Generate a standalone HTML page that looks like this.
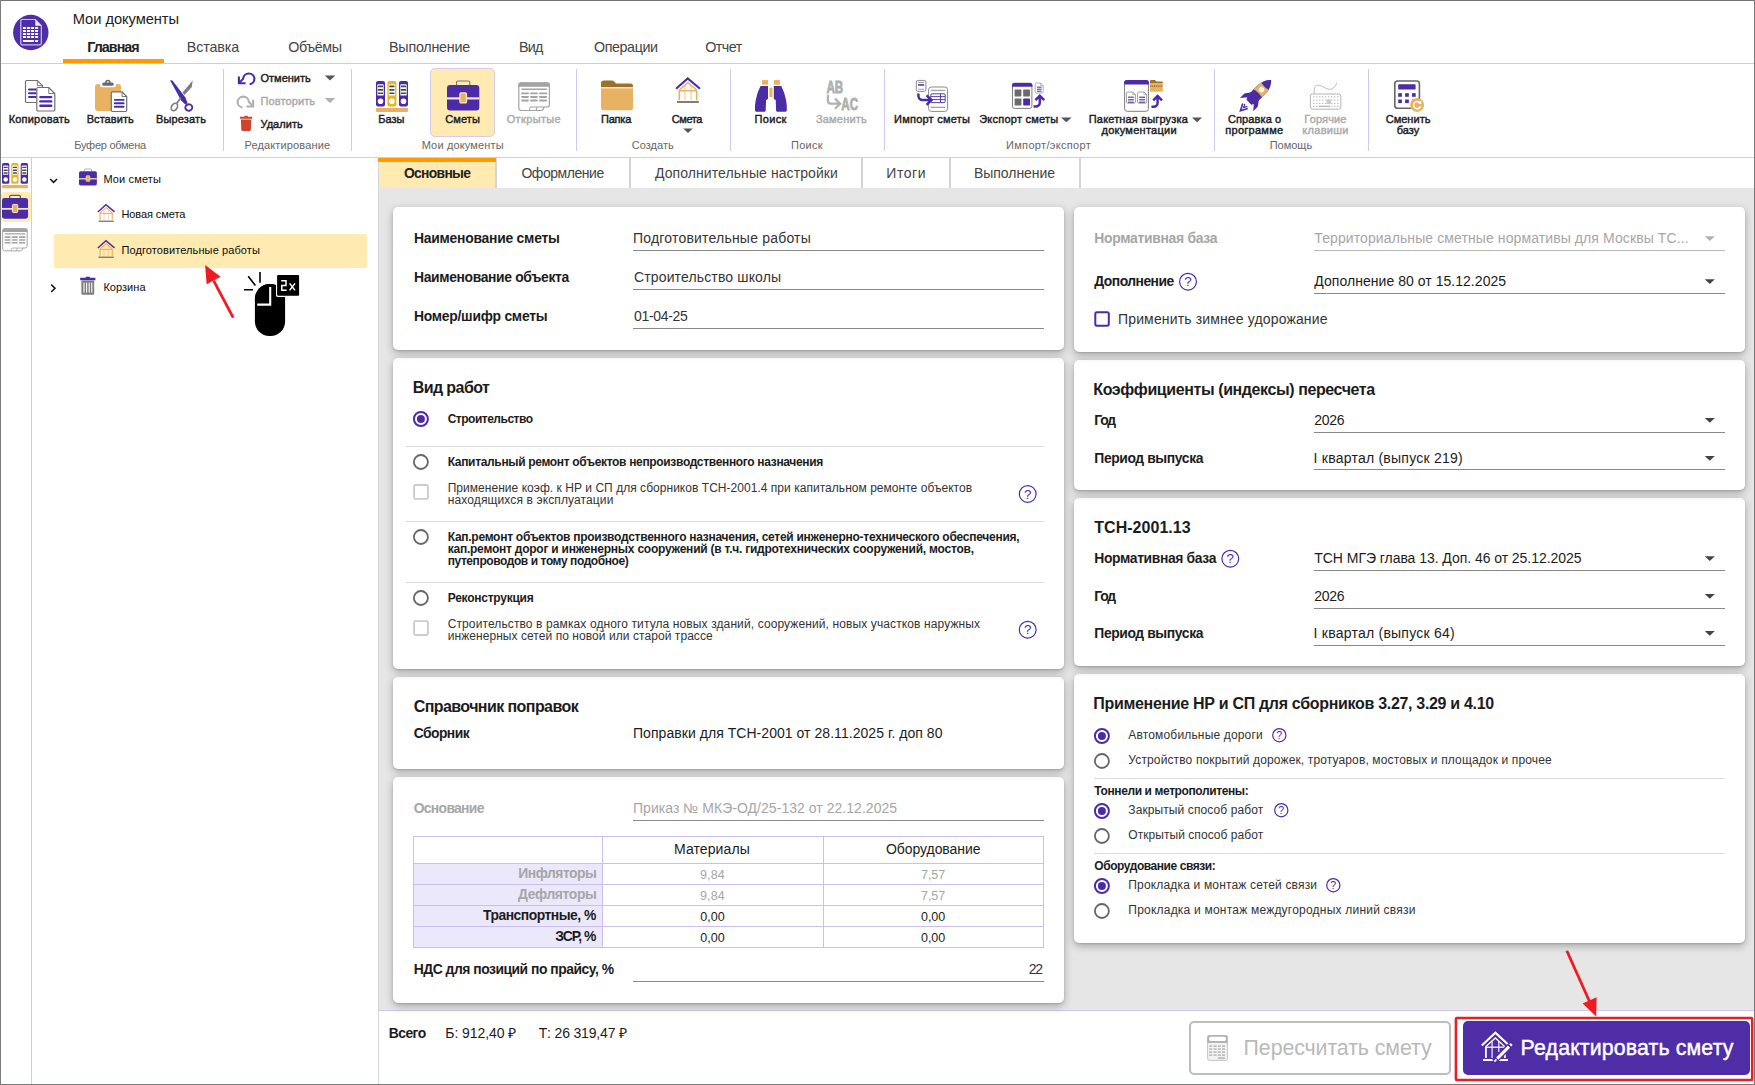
<!DOCTYPE html>
<html lang="ru"><head><meta charset="utf-8"><title>Мои документы</title>
<style>
html,body{margin:0;padding:0}
body{width:1755px;height:1085px;position:relative;overflow:hidden;background:#fff;font-family:"Liberation Sans",sans-serif}
.a{position:absolute}
.t{position:absolute;white-space:nowrap}
.tx{position:absolute;left:0;top:0;width:1755px;height:1085px}
.ov{position:absolute;left:0;top:0}
.ln{position:absolute;background:#d2c8f0}
.card{position:absolute;background:#fff;border-radius:5px;box-shadow:0 1px 2px rgba(0,0,0,.13),0 3px 9px rgba(0,0,0,.28)}
.ul{position:absolute;height:1px;background:#898989}
.gl{position:absolute;height:1px;background:#dcdcdc}
.hl{position:absolute;background:#ffeab2}
</style></head><body>
<div class="ln" style="left:0px;top:63px;width:1755px;height:1px;"></div>
<div class="a" style="left:63px;top:59px;width:101px;height:4px;background:#ff9a00"></div>
<div class="ln" style="left:0px;top:157px;width:1755px;height:1px;"></div>
<div class="ln" style="left:223px;top:69px;width:1px;height:82px;"></div>
<div class="ln" style="left:351px;top:69px;width:1px;height:82px;"></div>
<div class="ln" style="left:576px;top:69px;width:1px;height:82px;"></div>
<div class="ln" style="left:730px;top:69px;width:1px;height:82px;"></div>
<div class="ln" style="left:884px;top:69px;width:1px;height:82px;"></div>
<div class="ln" style="left:1214px;top:69px;width:1px;height:82px;"></div>
<div class="ln" style="left:1368px;top:69px;width:1px;height:82px;"></div>
<div class="a" style="left:430px;top:68px;width:65px;height:69px;background:#ffeab2;border:1px solid #d6c9f2;border-radius:5px;box-sizing:border-box"></div>
<div class="ln" style="left:31px;top:158px;width:1px;height:926px;"></div>
<div class="hl" style="left:1px;top:192px;width:29.8px;height:30px;border-radius:4px"></div>
<div class="hl" style="left:54px;top:234px;width:313px;height:34px;border-radius:2px"></div>
<div class="a" style="left:378px;top:188px;width:1377px;height:822px;background:#e6e6e6"></div>
<div class="a" style="left:378px;top:158px;width:1px;height:926px;background:#d2d5da"></div>
<div class="a" style="left:379px;top:158px;width:116px;height:30px;background:#ffeab2"></div>
<div class="a" style="left:495px;top:158px;width:1.8000000000000114px;height:30px;background:#d4d5d9"></div>
<div class="a" style="left:629px;top:158px;width:1.7999999999999545px;height:30px;background:#d4d5d9"></div>
<div class="a" style="left:861.4px;top:158px;width:1.7999999999999545px;height:30px;background:#d4d5d9"></div>
<div class="a" style="left:948.8px;top:158px;width:1.7999999999999545px;height:30px;background:#d4d5d9"></div>
<div class="a" style="left:1079px;top:158px;width:1.7999999999999545px;height:30px;background:#d4d5d9"></div>
<div class="a" style="left:378px;top:158px;width:118px;height:4px;background:#ff9a00"></div>
<div class="ln" style="left:378px;top:1010px;width:1377px;height:1px;"></div>
<div class="card" style="left:1074px;top:674px;width:671px;height:269px;"></div>
<div class="card" style="left:1074px;top:498px;width:671px;height:168px;"></div>
<div class="card" style="left:1074px;top:360px;width:671px;height:130px;"></div>
<div class="card" style="left:1074px;top:207px;width:671px;height:145px;"></div>
<div class="card" style="left:393px;top:777px;width:671px;height:226px;"></div>
<div class="card" style="left:393px;top:677px;width:671px;height:92px;"></div>
<div class="card" style="left:393px;top:358px;width:671px;height:311px;"></div>
<div class="card" style="left:393px;top:207px;width:671px;height:143px;"></div>
<div class="ul" style="left:633px;top:250px;width:411px;height:1px;"></div>
<div class="ul" style="left:633px;top:289px;width:411px;height:1px;"></div>
<div class="ul" style="left:633px;top:328px;width:411px;height:1px;"></div>
<div class="ul" style="left:633px;top:820px;width:411px;height:1px;"></div>
<div class="ul" style="left:633px;top:981px;width:411px;height:1px;"></div>
<div class="ul" style="left:1314px;top:250px;width:411px;height:1px;background:#b9b9b9"></div>
<div class="ul" style="left:1314px;top:293px;width:411px;height:1px;"></div>
<div class="ul" style="left:1314px;top:432px;width:411px;height:1px;"></div>
<div class="ul" style="left:1314px;top:469px;width:411px;height:1px;"></div>
<div class="ul" style="left:1314px;top:570px;width:411px;height:1px;"></div>
<div class="ul" style="left:1314px;top:608px;width:411px;height:1px;"></div>
<div class="ul" style="left:1314px;top:645px;width:411px;height:1px;"></div>
<div class="gl" style="left:406px;top:446px;width:638px;height:1px;"></div>
<div class="gl" style="left:406px;top:521px;width:638px;height:1px;"></div>
<div class="gl" style="left:406px;top:582px;width:638px;height:1px;"></div>
<div class="gl" style="left:1094px;top:778px;width:631px;height:1px;"></div>
<div class="gl" style="left:1094px;top:853px;width:631px;height:1px;"></div>
<div class="a" style="left:413px;top:836px;width:631px;height:112px;border:1px solid #cbbfee;box-sizing:border-box"></div>
<div class="a" style="left:414px;top:863px;width:188px;height:84px;background:#ece8fc"></div>
<div class="a" style="left:413px;top:863px;width:631px;height:1px;background:#cbbfee"></div>
<div class="a" style="left:413px;top:884px;width:631px;height:1px;background:#cbbfee"></div>
<div class="a" style="left:413px;top:905px;width:631px;height:1px;background:#cbbfee"></div>
<div class="a" style="left:413px;top:926px;width:631px;height:1px;background:#cbbfee"></div>
<div class="a" style="left:602px;top:836px;width:1px;height:112px;background:#cbbfee"></div>
<div class="a" style="left:823px;top:836px;width:1px;height:112px;background:#cbbfee"></div>
<div class="a" style="left:1189px;top:1021px;width:262px;height:54px;border:2px solid #bdbdbd;border-radius:5px;box-sizing:border-box;background:#fff"></div>
<div class="a" style="left:1463px;top:1021px;width:287px;height:54px;background:#4f2da7;border-radius:5px"></div>
<div class="a" style="left:0px;top:0px;width:1755px;height:1px;background:#747474"></div>
<div class="a" style="left:0px;top:0px;width:1px;height:1085px;background:#7c7c7c"></div>
<div class="a" style="left:1754px;top:0px;width:1px;height:1085px;background:#747a7a"></div>
<div class="a" style="left:0px;top:1084px;width:1755px;height:1px;background:#747a7a"></div>
<svg class="ov" width="1755" height="1085" viewBox="0 0 1755 1085">
<circle cx="30.8" cy="32.5" r="17.7" fill="#4f2da7"/><path d="M22,19.5 H35.2 L41.3,25.7 V43.6 a1.2,1.2 0 0 1 -1.2,1.2 H22 a1.2,1.2 0 0 1 -1.2,-1.2 V20.7 a1.2,1.2 0 0 1 1.2,-1.2 Z" fill="#4f2da7" stroke="#cdc2ea" stroke-width="1.2" stroke-linejoin="round"/><path d="M35.3,19.8 L41.2,25.8 H35.3 Z" fill="#f1eefa"/><rect x="22.90" y="27.00" width="3.1" height="2" rx="0.4" fill="#fff"/><rect x="26.93" y="27.00" width="3.1" height="2" rx="0.4" fill="#fff"/><rect x="30.96" y="27.00" width="3.1" height="2" rx="0.4" fill="#fff"/><rect x="34.99" y="27.00" width="3.1" height="2" rx="0.4" fill="#fff"/><rect x="22.90" y="30.02" width="3.1" height="2" rx="0.4" fill="#fff"/><rect x="26.93" y="30.02" width="3.1" height="2" rx="0.4" fill="#fff"/><rect x="30.96" y="30.02" width="3.1" height="2" rx="0.4" fill="#fff"/><rect x="34.99" y="30.02" width="3.1" height="2" rx="0.4" fill="#fff"/><rect x="22.90" y="33.04" width="3.1" height="2" rx="0.4" fill="#fff"/><rect x="26.93" y="33.04" width="3.1" height="2" rx="0.4" fill="#fff"/><rect x="30.96" y="33.04" width="3.1" height="2" rx="0.4" fill="#fff"/><rect x="34.99" y="33.04" width="3.1" height="2" rx="0.4" fill="#fff"/><rect x="22.90" y="36.06" width="3.1" height="2" rx="0.4" fill="#fff"/><rect x="26.93" y="36.06" width="3.1" height="2" rx="0.4" fill="#fff"/><rect x="30.96" y="36.06" width="3.1" height="2" rx="0.4" fill="#fff"/><rect x="34.99" y="36.06" width="3.1" height="2" rx="0.4" fill="#fff"/><rect x="22.9" y="40" width="11.1" height="2" rx="0.4" fill="#fff"/><rect x="34.99" y="40" width="3.1" height="2" rx="0.4" fill="#fff"/><path d="M26.7,80.5 H37.3 L42.5,85.7 V101.3 a1.2,1.2 0 0 1 -1.2,1.2 H26.7 a1.2,1.2 0 0 1 -1.2,-1.2 V81.7 a1.2,1.2 0 0 1 1.2,-1.2 Z" fill="#fff" stroke="#707070" stroke-width="1.2"/><path d="M37.3,80.5 V85.7 H42.5" fill="none" stroke="#707070" stroke-width="0.96"/><line x1="29" y1="89.4" x2="36" y2="89.4" stroke="#4c2ba6" stroke-width="2" stroke-linecap="round"/><line x1="29" y1="93.2" x2="36" y2="93.2" stroke="#4c2ba6" stroke-width="2" stroke-linecap="round"/><line x1="29" y1="97.1" x2="36" y2="97.1" stroke="#4c2ba6" stroke-width="2" stroke-linecap="round"/><path d="M38.0,87.5 H48.8 L54.8,93.5 V109.8 a1.2,1.2 0 0 1 -1.2,1.2 H38.0 a1.2,1.2 0 0 1 -1.2,-1.2 V88.7 a1.2,1.2 0 0 1 1.2,-1.2 Z" fill="#fff" stroke="#707070" stroke-width="1.2"/><path d="M48.8,87.5 V93.5 H54.8" fill="none" stroke="#707070" stroke-width="0.96"/><line x1="40.4" y1="97.1" x2="51.2" y2="97.1" stroke="#4c2ba6" stroke-width="2.4" stroke-linecap="round"/><line x1="40.4" y1="101.4" x2="51.2" y2="101.4" stroke="#4c2ba6" stroke-width="2.4" stroke-linecap="round"/><line x1="40.4" y1="105.8" x2="51.2" y2="105.8" stroke="#4c2ba6" stroke-width="2.4" stroke-linecap="round"/><rect x="95" y="84" width="26" height="27.1" rx="3" fill="#e8b262"/><rect x="99.8" y="82" width="16.4" height="5.3" rx="2.4" fill="#fff"/><circle cx="107.9" cy="82.5" r="2" fill="#fff" stroke="#6a6a6a" stroke-width="1.5"/><rect x="102.2" y="82.5" width="11.5" height="3.3" rx="1.6" fill="#6a6a6a"/><path d="M112.5,91.9 H122.10000000000001 L126.7,96.5 V110.3 a1.2,1.2 0 0 1 -1.2,1.2 H112.5 a1.2,1.2 0 0 1 -1.2,-1.2 V93.10000000000001 a1.2,1.2 0 0 1 1.2,-1.2 Z" fill="#fff" stroke="#707070" stroke-width="1.2"/><path d="M122.10000000000001,91.9 V96.5 H126.7" fill="none" stroke="#707070" stroke-width="0.96"/><line x1="114.8" y1="99.9" x2="123.6" y2="99.9" stroke="#4c2ba6" stroke-width="1.9" stroke-linecap="round"/><line x1="114.8" y1="103.3" x2="123.6" y2="103.3" stroke="#4c2ba6" stroke-width="1.9" stroke-linecap="round"/><line x1="114.8" y1="106.8" x2="123.6" y2="106.8" stroke="#4c2ba6" stroke-width="1.9" stroke-linecap="round"/><path d="M170,80.2 L172.4,80.5 L185.4,97.6 L187.6,103.2 L185.2,104.4 L181.2,100.6 Z" fill="#4c2ba6"/><path d="M192.7,80.5 L191.8,87 L184.6,95 L182.5,92.4 Z" fill="#7d7d7d"/><ellipse cx="188.8" cy="107.5" rx="3.5" ry="3.2" fill="none" stroke="#4c2ba6" stroke-width="1.9" transform="rotate(-20 188.8 107.5)"/><ellipse cx="174.4" cy="107" rx="2.8" ry="4" fill="none" stroke="#7d7d7d" stroke-width="1.6" transform="rotate(32 174.4 107)"/><path d="M180.8,97.8 L176.6,103.6" stroke="#7d7d7d" stroke-width="1.7"/><g transform="translate(0 0)" fill="none" stroke="#4c2ba6" stroke-width="2.1" stroke-linecap="butt"><path d="M238.9,76.6 V83.3 H245.6"/><path d="M239.3,82.9 L243.2,78.6 A5.6,5.4 0 1 1 249.6,84.2"/></g><g transform="translate(0 23.2) translate(492 0) scale(-1 1)" fill="none" stroke="#b0b0b0" stroke-width="2.1" stroke-linecap="butt"><path d="M238.9,76.6 V83.3 H245.6"/><path d="M239.3,82.9 L243.2,78.6 A5.6,5.4 0 1 1 249.6,84.2"/></g><path d="M244.4,115.8 h3.4 v0.9 h4.4 v2.1 h-12.2 v-2.1 h4.4 z" fill="#d0432f"/><path d="M240.9,119.5 H251.3 L250.9,129.6 a1.4,1.4 0 0 1 -1.4,1.4 H242.7 a1.4,1.4 0 0 1 -1.4,-1.4 Z" fill="#d0432f"/><path d="M324.8,75.4 H335.2 L330.0,80.4 Z" fill="#555"/><path d="M324.8,98 H335.2 L330.0,103 Z" fill="#b0b0b0"/><path d="M683.2,128.4 H692.8 L688.0,133 Z" fill="#555"/><path d="M1061,117.6 H1071.6 L1066.3,122.2 Z" fill="#555"/><path d="M1192,117.6 H1202 L1197.0,122.2 Z" fill="#555"/><g transform="translate(376 81) scale(1)"><rect x="0" y="0" width="9" height="25.6" rx="2" fill="#4c2ba6"/><rect x="1.3" y="3.2" width="6.4" height="11.4" rx="0.9" fill="#fff"/><rect x="1.9" y="4.6" width="5.2" height="1.7" rx="0.5" fill="#484848"/><rect x="1.9" y="8" width="5.2" height="1.7" rx="0.5" fill="#484848"/><rect x="1.9" y="11.4" width="5.2" height="1.7" rx="0.5" fill="#484848"/><circle cx="4.5" cy="20.3" r="2.8" fill="#fff"/><rect x="11.4" y="0" width="9" height="25.6" rx="2" fill="#e6b725"/><rect x="12.700000000000001" y="3.2" width="6.4" height="11.4" rx="0.9" fill="#fff"/><rect x="13.3" y="4.6" width="5.2" height="1.7" rx="0.5" fill="#484848"/><rect x="13.3" y="8" width="5.2" height="1.7" rx="0.5" fill="#484848"/><rect x="13.3" y="11.4" width="5.2" height="1.7" rx="0.5" fill="#484848"/><circle cx="15.9" cy="20.3" r="2.8" fill="#fff"/><rect x="23" y="0" width="9" height="25.6" rx="2" fill="#4c2ba6"/><rect x="24.3" y="3.2" width="6.4" height="11.4" rx="0.9" fill="#fff"/><rect x="24.9" y="4.6" width="5.2" height="1.7" rx="0.5" fill="#484848"/><rect x="24.9" y="8" width="5.2" height="1.7" rx="0.5" fill="#484848"/><rect x="24.9" y="11.4" width="5.2" height="1.7" rx="0.5" fill="#484848"/><circle cx="27.5" cy="20.3" r="2.8" fill="#fff"/><rect x="0" y="27" width="32" height="4" rx="1" fill="#e8b262"/></g><g transform="translate(2 163) scale(0.8125)"><rect x="0" y="0" width="9" height="25.6" rx="2" fill="#4c2ba6"/><rect x="1.3" y="3.2" width="6.4" height="11.4" rx="0.9" fill="#fff"/><rect x="1.9" y="4.6" width="5.2" height="1.7" rx="0.5" fill="#484848"/><rect x="1.9" y="8" width="5.2" height="1.7" rx="0.5" fill="#484848"/><rect x="1.9" y="11.4" width="5.2" height="1.7" rx="0.5" fill="#484848"/><circle cx="4.5" cy="20.3" r="2.8" fill="#fff"/><rect x="11.4" y="0" width="9" height="25.6" rx="2" fill="#e6b725"/><rect x="12.700000000000001" y="3.2" width="6.4" height="11.4" rx="0.9" fill="#fff"/><rect x="13.3" y="4.6" width="5.2" height="1.7" rx="0.5" fill="#484848"/><rect x="13.3" y="8" width="5.2" height="1.7" rx="0.5" fill="#484848"/><rect x="13.3" y="11.4" width="5.2" height="1.7" rx="0.5" fill="#484848"/><circle cx="15.9" cy="20.3" r="2.8" fill="#fff"/><rect x="23" y="0" width="9" height="25.6" rx="2" fill="#4c2ba6"/><rect x="24.3" y="3.2" width="6.4" height="11.4" rx="0.9" fill="#fff"/><rect x="24.9" y="4.6" width="5.2" height="1.7" rx="0.5" fill="#484848"/><rect x="24.9" y="8" width="5.2" height="1.7" rx="0.5" fill="#484848"/><rect x="24.9" y="11.4" width="5.2" height="1.7" rx="0.5" fill="#484848"/><circle cx="27.5" cy="20.3" r="2.8" fill="#fff"/><rect x="0" y="27" width="32" height="4" rx="1" fill="#e8b262"/></g><g transform="translate(447 80) scale(1)"><path d="M9.5,5.2 V2.5999999999999996 a1.6,1.6 0 0 1 1.6,-1.6 H21.2 a1.6,1.6 0 0 1 1.6,1.6 V5.2" fill="none" stroke="#747474" stroke-width="1.1"/><rect x="0" y="5" width="32.3" height="25.6" rx="3" fill="#4c2ba6"/><rect x="0" y="17.3" width="32.3" height="2.2" fill="#f7e6c4"/><rect x="12.9" y="12.9" width="6.6" height="10" rx="1" fill="#e8b262" stroke="#fbe8bd" stroke-width="1.2"/></g><g transform="translate(2 194) scale(0.807)"><path d="M9.5,5.2 V3.1999999999999997 a1.6,1.6 0 0 1 1.6,-1.6 H21.2 a1.6,1.6 0 0 1 1.6,1.6 V5.2" fill="none" stroke="#5e5e5e" stroke-width="1.6"/><rect x="0" y="5" width="32.3" height="25.6" rx="3" fill="#4c2ba6"/><rect x="0" y="17.3" width="32.3" height="2.2" fill="#f7e6c4"/><rect x="12.9" y="12.9" width="6.6" height="10" rx="1" fill="#e8b262" stroke="#fbe8bd" stroke-width="1.2"/></g><g transform="translate(79 168.6) scale(0.553)"><path d="M9.5,5.2 V2.3999999999999995 a1.6,1.6 0 0 1 1.6,-1.6 H21.2 a1.6,1.6 0 0 1 1.6,1.6 V5.2" fill="none" stroke="#8a8a8a" stroke-width="1.2"/><rect x="0" y="5" width="32.3" height="25.6" rx="3" fill="#4c2ba6"/><rect x="0" y="17.3" width="32.3" height="2.2" fill="#f7e6c4"/><rect x="12.9" y="12.9" width="6.6" height="10" rx="1" fill="#e8b262" stroke="#fbe8bd" stroke-width="1.2"/></g><g transform="translate(518.2 82.2) scale(1)"><path d="M0.6,2.8 a2.2,2.2 0 0 1 2.2,-2.2 H29 a2.2,2.2 0 0 1 2.2,2.2 V22.2 a2.6,2.6 0 0 1 -2.6,2.6 H25.9 L24.8,27.3 a1.6,1.6 0 0 1 -1.5,1 H3 a2.4,2.4 0 0 1 -2.4,-2.4 Z" fill="#fff" stroke="#a3a3a3" stroke-width="1.2"/><path d="M0.2,4.6 V2.8 a2.6,2.6 0 0 1 2.6,-2.6 H29 a2.6,2.6 0 0 1 2.6,2.6 V4.6 Z" fill="#a3a3a3"/><path d="M11.4,28.3 V26.2 a1.4,1.4 0 0 1 1.4,-1.4 H26.4 M18.7,24.8 L17.9,28.3" fill="none" stroke="#a3a3a3" stroke-width="1"/><rect x="3" y="6.2" width="26" height="1.7" rx="0.8" fill="#a3a3a3"/><rect x="3" y="10.2" width="7.7" height="1.9" rx="0.8" fill="#a3a3a3"/><rect x="11.9" y="10.2" width="7.7" height="1.9" rx="0.8" fill="#a3a3a3"/><rect x="20.9" y="10.2" width="8.1" height="1.9" rx="0.8" fill="#a3a3a3"/><rect x="3" y="13.8" width="7.7" height="1.9" rx="0.8" fill="#a3a3a3"/><rect x="11.9" y="13.8" width="7.7" height="1.9" rx="0.8" fill="#a3a3a3"/><rect x="20.9" y="13.8" width="8.1" height="1.9" rx="0.8" fill="#a3a3a3"/><rect x="3" y="17.3" width="7.7" height="1.9" rx="0.8" fill="#a3a3a3"/><rect x="11.9" y="17.3" width="7.7" height="1.9" rx="0.8" fill="#a3a3a3"/><rect x="20.9" y="17.3" width="8.1" height="1.9" rx="0.8" fill="#a3a3a3"/></g><g transform="translate(2.2 228.2) scale(0.8)"><path d="M0.6,2.8 a2.2,2.2 0 0 1 2.2,-2.2 H29 a2.2,2.2 0 0 1 2.2,2.2 V22.2 a2.6,2.6 0 0 1 -2.6,2.6 H25.9 L24.8,27.3 a1.6,1.6 0 0 1 -1.5,1 H3 a2.4,2.4 0 0 1 -2.4,-2.4 Z" fill="#fff" stroke="#a3a3a3" stroke-width="1.2"/><path d="M0.2,4.6 V2.8 a2.6,2.6 0 0 1 2.6,-2.6 H29 a2.6,2.6 0 0 1 2.6,2.6 V4.6 Z" fill="#a3a3a3"/><path d="M11.4,28.3 V26.2 a1.4,1.4 0 0 1 1.4,-1.4 H26.4 M18.7,24.8 L17.9,28.3" fill="none" stroke="#a3a3a3" stroke-width="1"/><rect x="3" y="6.2" width="26" height="1.7" rx="0.8" fill="#a3a3a3"/><rect x="3" y="10.2" width="7.7" height="1.9" rx="0.8" fill="#a3a3a3"/><rect x="11.9" y="10.2" width="7.7" height="1.9" rx="0.8" fill="#a3a3a3"/><rect x="20.9" y="10.2" width="8.1" height="1.9" rx="0.8" fill="#a3a3a3"/><rect x="3" y="13.8" width="7.7" height="1.9" rx="0.8" fill="#a3a3a3"/><rect x="11.9" y="13.8" width="7.7" height="1.9" rx="0.8" fill="#a3a3a3"/><rect x="20.9" y="13.8" width="8.1" height="1.9" rx="0.8" fill="#a3a3a3"/><rect x="3" y="17.3" width="7.7" height="1.9" rx="0.8" fill="#a3a3a3"/><rect x="11.9" y="17.3" width="7.7" height="1.9" rx="0.8" fill="#a3a3a3"/><rect x="20.9" y="17.3" width="8.1" height="1.9" rx="0.8" fill="#a3a3a3"/></g><path d="M601,88 V83.6 a3,3 0 0 1 3,-3 H612 a3,3 0 0 1 2.2,1 L616,83.6 H630.2 a2.8,2.8 0 0 1 2.8,2.8 V88 Z" fill="#9a7127"/><path d="M601,88.2 H633 V107.4 a2.8,2.8 0 0 1 -2.8,2.8 H603.8 a2.8,2.8 0 0 1 -2.8,-2.8 Z" fill="#e8b262"/><rect x="601" y="87.2" width="32" height="0.9" fill="#fff"/><g transform="translate(675.2 76.8) scale(1)" fill="none"><g stroke="#e8b262" stroke-width="1.45"><path d="M4.1,13.4 L12.8,5.7 L21.6,13.4"/><path d="M4,14 H21.8"/><path d="M4.1,13.4 V23.5 M21.5,13.4 V23.5" stroke-width="1.6"/><path d="M9.7,9 V23.5 M15.8,9 V23.5" stroke-width="1.3" opacity="0.55"/></g><path d="M0.9,11.9 L12.5,1.6 L24.8,11.9" stroke="#4c2ba6" stroke-width="2.1"/><path d="M1.8,25.2 H23.7" stroke="#707070" stroke-width="1.8"/></g><g transform="translate(97.2 203.6) scale(0.7)" fill="none"><g stroke="#e8b262" stroke-width="1.45"><path d="M4.1,13.4 L12.8,5.7 L21.6,13.4"/><path d="M4,14 H21.8"/><path d="M4.1,13.4 V23.5 M21.5,13.4 V23.5" stroke-width="1.6"/><path d="M9.7,9 V23.5 M15.8,9 V23.5" stroke-width="1.3" opacity="0.55"/></g><path d="M0.9,11.9 L12.5,1.6 L24.8,11.9" stroke="#4c2ba6" stroke-width="2.1"/><path d="M1.8,25.2 H23.7" stroke="#707070" stroke-width="1.8"/></g><g transform="translate(97.2 239.6) scale(0.7)" fill="none"><g stroke="#e8b262" stroke-width="1.45"><path d="M4.1,13.4 L12.8,5.7 L21.6,13.4"/><path d="M4,14 H21.8"/><path d="M4.1,13.4 V23.5 M21.5,13.4 V23.5" stroke-width="1.6"/><path d="M9.7,9 V23.5 M15.8,9 V23.5" stroke-width="1.3" opacity="0.55"/></g><path d="M0.9,11.9 L12.5,1.6 L24.8,11.9" stroke="#4c2ba6" stroke-width="2.1"/><path d="M1.8,25.2 H23.7" stroke="#707070" stroke-width="1.8"/></g><path d="M760.6,86 H768 V98.9 L766.1,100 L765.7,110.6 Q765.6,111.8 764.4,111.8 H756.6 Q755,111.8 755,110.2 V105.2 Q756,95 760.6,86 Z" fill="#4c2ba6"/><path d="M760.6,86 H768 V98.9 L766.1,100 L765.7,110.6 Q765.6,111.8 764.4,111.8 H756.6 Q755,111.8 755,110.2 V105.2 Q756,95 760.6,86 Z" fill="#4c2ba6" transform="translate(1541.8 0) scale(-1 1)"/><rect x="762" y="80.1" width="6.1" height="4.6" fill="#e8b262"/><rect x="773.8" y="80.1" width="6.1" height="4.6" fill="#e8b262"/><rect x="769.4" y="87.7" width="3.1" height="9.3" fill="#e8b262"/><g style="font-family:'Liberation Sans',sans-serif;font-weight:700;font-size:15.8px" fill="#b0b0b0" stroke="#b0b0b0" stroke-width="0.8"><text transform="translate(826.4 92.5) scale(0.74 1)">AB</text><text transform="translate(841.2 109.6) scale(0.74 1)">AC</text></g><path d="M827.9,94.8 V100.8 a2.8,2.8 0 0 0 2.8,2.8 H839.4 M835,98.6 L840.2,103.7 L835,108.8" fill="none" stroke="#b0b0b0" stroke-width="2.2"/><rect x="916.3" y="80.4" width="9.6" height="11" rx="1.6" fill="#fff" stroke="#7d7d7d" stroke-width="0.9"/><rect x="918" y="84.2" width="6.2" height="1.5" fill="#4c2ba6"/><rect x="918" y="82" width="6.2" height="0.9" fill="#999"/><rect x="918" y="88.8" width="6.2" height="0.9" fill="#999"/><rect x="928.6" y="87" width="19" height="24.4" rx="2.8" fill="#fff" stroke="#8a8a8a" stroke-width="1"/><rect x="930.8" y="89.8" width="14.4" height="1.3" fill="#a4a4a4"/><rect x="930.8" y="106.7" width="14.4" height="1.3" fill="#a4a4a4"/><rect x="930.8" y="93.8" width="14.4" height="8.8" rx="1.2" fill="none" stroke="#4c2ba6" stroke-width="0.9"/><path d="M930.8,96.6 H945.2 M930.8,99.6 H945.2 M940.5,93.8 V102.6" fill="none" stroke="#4c2ba6" stroke-width="0.9"/><path d="M918.4,93.6 V95.8 a4.2,4.2 0 0 0 4.2,4.2 H930.4 M926.6,95.4 L931.4,100 L926.6,104.8" fill="none" stroke="#4c2ba6" stroke-width="2.5"/><rect x="1012.5" y="83.2" width="19.4" height="25.2" rx="2" fill="#fff" stroke="#7d7d7d" stroke-width="1"/><path d="M1012,86.8 V85.2 a2.2,2.2 0 0 1 2.2,-2.2 H1030.2 a2.2,2.2 0 0 1 2.2,2.2 V86.8 Z" fill="#4c2ba6"/><rect x="1014.6" y="89.4" width="6.8" height="7.2" rx="0.8" fill="#6b6b6b"/><rect x="1023.2" y="89.4" width="6.8" height="7.2" rx="0.8" fill="#6b6b6b"/><rect x="1014.6" y="98.4" width="6.8" height="7.2" rx="0.8" fill="#6b6b6b"/><rect x="1023.2" y="98.4" width="6.8" height="7.2" rx="0.8" fill="#4c2ba6"/><path d="M1036.4,83 H1040.6000000000001 L1043.2,85.6 V91.8 a1.2,1.2 0 0 1 -1.2,1.2 H1036.4 a1.2,1.2 0 0 1 -1.2,-1.2 V84.2 a1.2,1.2 0 0 1 1.2,-1.2 Z" fill="#fff" stroke="#9a9a9a" stroke-width="0.8"/><path d="M1040.6000000000001,83 V85.6 H1043.2" fill="none" stroke="#9a9a9a" stroke-width="0.6400000000000001"/><line x1="1037" y1="87.2" x2="1041.6" y2="87.2" stroke="#4c2ba6" stroke-width="1"/><line x1="1037" y1="89.2" x2="1041.6" y2="89.2" stroke="#4c2ba6" stroke-width="1"/><line x1="1037" y1="91.2" x2="1041.6" y2="91.2" stroke="#4c2ba6" stroke-width="1"/><path d="M1033.6,106.60000000000001 H1035.8 a4,4 0 0 0 4,-4 V96.4 M1035.3999999999999,100.2 L1039.8,95.8 L1044.1999999999998,100.2" fill="none" stroke="#4c2ba6" stroke-width="2.5"/><rect x="1124.6" y="80.5" width="23.8" height="30.8" rx="2.6" fill="#fff" stroke="#7d7d7d" stroke-width="1"/><path d="M1124.1,84.4 V82.6 a2.6,2.6 0 0 1 2.6,-2.6 H1146.3 a2.6,2.6 0 0 1 2.6,2.6 V84.4 Z" fill="#4c2ba6"/><path d="M1127.6000000000001,92 H1132.8000000000002 L1135.4,94.6 V102.0 a1.2,1.2 0 0 1 -1.2,1.2 H1127.6000000000001 a1.2,1.2 0 0 1 -1.2,-1.2 V93.2 a1.2,1.2 0 0 1 1.2,-1.2 Z" fill="#fff" stroke="#8a8a8a" stroke-width="0.8"/><path d="M1132.8000000000002,92 V94.6 H1135.4" fill="none" stroke="#8a8a8a" stroke-width="0.6400000000000001"/><path d="M1138.8,92 H1144.0 L1146.6,94.6 V102.0 a1.2,1.2 0 0 1 -1.2,1.2 H1138.8 a1.2,1.2 0 0 1 -1.2,-1.2 V93.2 a1.2,1.2 0 0 1 1.2,-1.2 Z" fill="#fff" stroke="#8a8a8a" stroke-width="0.8"/><path d="M1144.0,92 V94.6 H1146.6" fill="none" stroke="#8a8a8a" stroke-width="0.6400000000000001"/><line x1="1128" y1="97.2" x2="1133.8" y2="97.2" stroke="#4c2ba6" stroke-width="1.1"/><line x1="1128" y1="99.8" x2="1133.8" y2="99.8" stroke="#4c2ba6" stroke-width="1.1"/><line x1="1128" y1="102.2" x2="1133.8" y2="102.2" stroke="#4c2ba6" stroke-width="1.1"/><line x1="1139.2" y1="97.2" x2="1145" y2="97.2" stroke="#4c2ba6" stroke-width="1.1"/><line x1="1139.2" y1="99.8" x2="1145" y2="99.8" stroke="#4c2ba6" stroke-width="1.1"/><line x1="1139.2" y1="102.2" x2="1145" y2="102.2" stroke="#4c2ba6" stroke-width="1.1"/><path d="M1150,83.4 V81 a1,1 0 0 1 1,-1 H1155 l1.4,1.4 H1161.8 a1,1 0 0 1 1,1 V83.4 Z" fill="#9a7127"/><rect x="1150" y="83.2" width="12.8" height="8.6" rx="0.8" fill="#e8b262"/><path d="M1150.4,86.2 H1162.6" stroke="#7a5a22" stroke-width="1.3" stroke-dasharray="1 0.8"/><path d="M1151.4,106.80000000000001 H1153.6000000000001 a4,4 0 0 0 4,-4 V96.60000000000001 M1153.2,100.4 L1157.6000000000001,96.0 L1162.0,100.4" fill="none" stroke="#4c2ba6" stroke-width="2.5"/><clipPath id="rk"><path d="M0,-20 C3.6,-17 5.8,-12 5.8,-6 V7.5 L3.4,11.4 H-3.4 L-5.8,7.5 V-6 C-5.8,-12 -3.6,-17 0,-20 Z"/></clipPath><g transform="translate(1257 94.2) rotate(45)"><path d="M-4.6,9 L-9.4,14.8 V8.4 L-4.6,1.6 Z M4.6,9 L9.4,14.8 V8.4 L4.6,1.6 Z" fill="#4c2ba6"/><path d="M0,-20 C3.6,-17 5.8,-12 5.8,-6 V7.5 L3.4,11.4 H-3.4 L-5.8,7.5 V-6 C-5.8,-12 -3.6,-17 0,-20 Z" fill="#4c2ba6"/><path clip-path="url(#rk)" d="M-7,-11.4 Q0,-9.8 7,-11.4 V-1.2 Q0,-2.8 -7,-1.2 Z" fill="#e8b262"/><circle cx="0" cy="-6.4" r="2.7" fill="#fff"/><path d="M-3.6,16.6 L0,23.4 L3.6,16.6" fill="none" stroke="#4c2ba6" stroke-width="1.6"/><path d="M-1.8,15.4 L0,19 L1.8,15.4" fill="none" stroke="#4c2ba6" stroke-width="1.2"/></g><rect x="1310.4" y="94" width="30.4" height="15.2" rx="2.2" fill="#fff" stroke="#b5b5b5" stroke-width="1"/><path d="M1314.2,94 V89.6 C1314.2,84 1320,84.4 1324,87.2 S1333,91.4 1337,82.8" fill="none" stroke="#b5b5b5" stroke-width="0.9"/><path d="M1313,96.9 H1338.4" stroke="#c2c2c2" stroke-width="1.3" stroke-dasharray="1.4 1.6"/><path d="M1313,100.2 H1338.4" stroke="#c2c2c2" stroke-width="1.3" stroke-dasharray="1.4 1.6"/><path d="M1313,103.3 H1338.4" stroke="#c2c2c2" stroke-width="1.3" stroke-dasharray="1.4 1.6"/><path d="M1313,106.4 H1338.4" stroke="#c2c2c2" stroke-width="1.3" stroke-dasharray="1.4 1.6"/><rect x="1319" y="105.7" width="11.4" height="1.4" fill="#bdbdbd"/><rect x="1326.6" y="99.4" width="4.2" height="4.6" fill="#c9c9c9"/><rect x="1394.8" y="81" width="24.6" height="27.2" rx="2.8" fill="#fff" stroke="#666" stroke-width="1.6"/><rect x="1398.2" y="84.2" width="17.4" height="5.4" rx="0.8" fill="#4c2ba6"/><rect x="1398.2" y="93.2" width="3.7" height="3.6" fill="#4c2ba6"/><rect x="1398.2" y="99.5" width="3.7" height="3.6" fill="#4c2ba6"/><rect x="1405.1" y="93.2" width="3.7" height="3.6" fill="#4c2ba6"/><rect x="1405.1" y="99.5" width="3.7" height="3.6" fill="#4c2ba6"/><rect x="1412" y="93.2" width="3.7" height="3.6" fill="#4c2ba6"/><rect x="1412" y="99.5" width="3.7" height="3.6" fill="#4c2ba6"/><circle cx="1417.1" cy="104.9" r="7" fill="#e8b262"/><path d="M1420.3,103.4 A3.6,3.6 0 1 0 1420.6,106.2" fill="none" stroke="#fff" stroke-width="1.4"/><path d="M1417.6,102.9 L1421.4,104.4 L1421.2,100.4 Z" fill="#fff"/><path d="M50.2,179 L53.6,182.4 L57,179" fill="none" stroke="#111" stroke-width="1.5"/><path d="M51.2,284.6 L55,288.3 L51.2,292" fill="none" stroke="#111" stroke-width="1.5"/><path d="M85.8,276.8 h4 v1 h5.6 v2.5 h-15.2 v-2.5 h5.6 z" fill="#4c2ba6"/><path d="M81.4,280.6 H94.2 V293.5 a1.2,1.2 0 0 1 -1.2,1.2 H82.6 a1.2,1.2 0 0 1 -1.2,-1.2 Z" fill="#7d7d7d"/><rect x="83.45" y="282.6" width="1.1" height="10" fill="#fff"/><rect x="86.05" y="282.6" width="1.1" height="10" fill="#fff"/><rect x="88.65" y="282.6" width="1.1" height="10" fill="#fff"/><rect x="91.25" y="282.6" width="1.1" height="10" fill="#fff"/><path d="M233.2,317.6 L213.6,280.6" stroke="#ed1c24" stroke-width="2.8"/><path d="M205.1,265 L220.6,276.8 L206.6,284.2 Z" fill="#ed1c24"/><path d="M1566.8,950.8 L1590.2,1003" stroke="#ed1c24" stroke-width="2.8"/><path d="M1596.2,1016.4 L1582.6,1003.4 L1596.6,997.2 Z" fill="#ed1c24"/><rect x="254.9" y="284" width="30.2" height="52" rx="14.6" fill="#000"/><path d="M254.9,300 a15.1,16 0 0 1 30.2,0 Z" fill="#000"/><path d="M270.2,287 V304.6 H257.2" fill="none" stroke="#fff" stroke-width="2.1"/><rect x="276" y="273.9" width="24.2" height="23" rx="1.6" fill="#fff"/><rect x="277.1" y="275" width="22" height="20.8" rx="1" fill="#000"/><path d="M281.2,280.8 H286 V285.4 H281.8 V290.2 H286.6" fill="none" stroke="#fff" stroke-width="1.5"/><path d="M289.6,283.4 L295,290.4 M295,283.4 L289.6,290.4" fill="none" stroke="#fff" stroke-width="1.5"/><path d="M260,272 V282.8 M248.2,276.2 L255.4,285.6 M244,289.8 H253" fill="none" stroke="#000" stroke-width="1.6"/><rect x="1455.9" y="1018" width="296.3" height="62" rx="1" fill="none" stroke="#ea1c24" stroke-width="2.5"/><circle cx="420.9" cy="419.0" r="7" fill="#fff" stroke="#4c2ba6" stroke-width="2"/><circle cx="420.9" cy="419.0" r="4" fill="#4c2ba6"/><circle cx="420.9" cy="462.0" r="7" fill="#fff" stroke="#666" stroke-width="1.8"/><circle cx="420.9" cy="537.0" r="7" fill="#fff" stroke="#666" stroke-width="1.8"/><circle cx="420.9" cy="598.0" r="7" fill="#fff" stroke="#666" stroke-width="1.8"/><circle cx="1101.9" cy="736.0" r="7" fill="#fff" stroke="#4c2ba6" stroke-width="2"/><circle cx="1101.9" cy="736.0" r="4" fill="#4c2ba6"/><circle cx="1101.9" cy="761.0" r="7" fill="#fff" stroke="#666" stroke-width="1.8"/><circle cx="1101.9" cy="811.0" r="7" fill="#fff" stroke="#4c2ba6" stroke-width="2"/><circle cx="1101.9" cy="811.0" r="4" fill="#4c2ba6"/><circle cx="1101.9" cy="836.0" r="7" fill="#fff" stroke="#666" stroke-width="1.8"/><circle cx="1101.9" cy="886.0" r="7" fill="#fff" stroke="#4c2ba6" stroke-width="2"/><circle cx="1101.9" cy="886.0" r="4" fill="#4c2ba6"/><circle cx="1101.9" cy="911.0" r="7" fill="#fff" stroke="#666" stroke-width="1.8"/><rect x="414.1" y="485.0" width="13.8" height="13.8" rx="1.4" fill="#fff" stroke="#cbcbcb" stroke-width="1.8"/><rect x="414.1" y="621.1999999999999" width="13.8" height="13.8" rx="1.4" fill="#fff" stroke="#cbcbcb" stroke-width="1.8"/><rect x="1095.3" y="312.2" width="13.5" height="13.5" rx="1.6" fill="#fff" stroke="#4c2ba6" stroke-width="2"/><circle cx="1188" cy="281.7" r="8.4" fill="#fff" stroke="#4c2ba6" stroke-width="1.2"/><text x="1188" y="286.4" text-anchor="middle" font-family="Liberation Sans, sans-serif" font-size="13.4" fill="#4c2ba6">?</text><circle cx="1027.7" cy="494" r="8.4" fill="#fff" stroke="#4c2ba6" stroke-width="1.2"/><text x="1027.7" y="498.7" text-anchor="middle" font-family="Liberation Sans, sans-serif" font-size="13.4" fill="#4c2ba6">?</text><circle cx="1027.7" cy="629.7" r="8.4" fill="#fff" stroke="#4c2ba6" stroke-width="1.2"/><text x="1027.7" y="634.4000000000001" text-anchor="middle" font-family="Liberation Sans, sans-serif" font-size="13.4" fill="#4c2ba6">?</text><circle cx="1230.3" cy="558.7" r="8.4" fill="#fff" stroke="#4c2ba6" stroke-width="1.2"/><text x="1230.3" y="563.4000000000001" text-anchor="middle" font-family="Liberation Sans, sans-serif" font-size="13.4" fill="#4c2ba6">?</text><circle cx="1279.3" cy="735.2" r="6.6" fill="#fff" stroke="#4c2ba6" stroke-width="1.2"/><text x="1279.3" y="738.9000000000001" text-anchor="middle" font-family="Liberation Sans, sans-serif" font-size="10.6" fill="#4c2ba6">?</text><circle cx="1281.3" cy="810.2" r="6.6" fill="#fff" stroke="#4c2ba6" stroke-width="1.2"/><text x="1281.3" y="813.9000000000001" text-anchor="middle" font-family="Liberation Sans, sans-serif" font-size="10.6" fill="#4c2ba6">?</text><circle cx="1333.3" cy="885.2" r="6.6" fill="#fff" stroke="#4c2ba6" stroke-width="1.2"/><text x="1333.3" y="888.9000000000001" text-anchor="middle" font-family="Liberation Sans, sans-serif" font-size="10.6" fill="#4c2ba6">?</text><path d="M1704.8,236.2 H1714.8 L1709.8,240.9 Z" fill="#b0b0b0"/><path d="M1704.8,279.20000000000005 H1714.8 L1709.8,283.90000000000003 Z" fill="#444"/><path d="M1704.8,418.0 H1714.8 L1709.8,422.7 Z" fill="#444"/><path d="M1704.8,456.0 H1714.8 L1709.8,460.7 Z" fill="#444"/><path d="M1704.8,556.3000000000001 H1714.8 L1709.8,561.0 Z" fill="#444"/><path d="M1704.8,594.0 H1714.8 L1709.8,598.6999999999999 Z" fill="#444"/><path d="M1704.8,631.0 H1714.8 L1709.8,635.6999999999999 Z" fill="#444"/><rect x="1207.6" y="1042" width="19.8" height="18.4" rx="2" fill="#f3f3f3" stroke="#c4c4c4" stroke-width="1"/><path d="M1207.1,1043 V1037.6 a2.5,2.5 0 0 1 2.5,-2.5 H1225.4 a2.5,2.5 0 0 1 2.5,2.5 V1043 Z" fill="#b3b3b3"/><rect x="1209" y="1036.8" width="17" height="4.2" rx="2" fill="#fff"/><rect x="1209.2" y="1045.3" width="3" height="1.6" fill="#b8b8b8"/><rect x="1213.6" y="1045.3" width="3" height="1.6" fill="#b8b8b8"/><rect x="1217.8" y="1045.3" width="3" height="1.6" fill="#b8b8b8"/><rect x="1222" y="1045.3" width="3" height="1.6" fill="#b8b8b8"/><rect x="1209.2" y="1048.3" width="3" height="1.6" fill="#b8b8b8"/><rect x="1213.6" y="1048.3" width="3" height="1.6" fill="#b8b8b8"/><rect x="1217.8" y="1048.3" width="3" height="1.6" fill="#b8b8b8"/><rect x="1222" y="1048.3" width="3" height="1.6" fill="#b8b8b8"/><rect x="1209.2" y="1051.3" width="3" height="1.6" fill="#b8b8b8"/><rect x="1213.6" y="1051.3" width="3" height="1.6" fill="#b8b8b8"/><rect x="1217.8" y="1051.3" width="3" height="1.6" fill="#b8b8b8"/><rect x="1222" y="1051.3" width="3" height="1.6" fill="#b8b8b8"/><rect x="1209.2" y="1054.3" width="3" height="1.6" fill="#b8b8b8"/><rect x="1213.6" y="1054.3" width="3" height="1.6" fill="#b8b8b8"/><rect x="1217.8" y="1054.3" width="3" height="1.6" fill="#b8b8b8"/><rect x="1222" y="1054.3" width="3" height="1.6" fill="#b8b8b8"/><rect x="1217.8" y="1057.3" width="7.2" height="1.6" fill="#b8b8b8"/><g fill="none" stroke="#fff"><path d="M1481.8,1045.4 L1495.4,1032.8 L1508.4,1044.8" stroke-width="2.1"/><path d="M1485.9,1046.6 L1495.4,1038 L1504.6,1046.4" stroke-width="1.3"/><path d="M1485.4,1047.2 H1504.6" stroke-width="1.3"/><path d="M1485.9,1046.6 V1058 M1504.8,1054 V1058" stroke-width="1.8"/><path d="M1492.1,1041.4 V1058 M1498.8,1041.4 V1052" stroke-width="1.3" opacity="0.85"/><path d="M1483,1060 H1508" stroke-width="2"/></g><path d="M1512.4,1043.2 L1494.2,1061.8" stroke="#4c2ba6" stroke-width="5.6"/><path d="M1509,1046.6 L1497.2,1058.6" stroke="#fff" stroke-width="3"/><path d="M1511.6,1044 L1510.2,1045.4" stroke="#fff" stroke-width="3"/><path d="M1496.4,1059.4 L1494.4,1061.6" stroke="#fff" stroke-width="1.6"/>
</svg>
<div class="tx">
<span class="t" style="left:72.80px;top:9.30px;font-size:14.67px;line-height:21px;color:#222;letter-spacing:-0.047px">Мои документы</span>
<span class="t" style="left:87.30px;top:37.30px;font-size:14.3px;line-height:20px;color:#222;letter-spacing:-0.967px;font-weight:700">Главная</span>
<span class="t" style="left:186.70px;top:37.30px;font-size:14.3px;line-height:20px;color:#444;letter-spacing:-0.098px">Вставка</span>
<span class="t" style="left:288.30px;top:37.30px;font-size:14.3px;line-height:20px;color:#444;letter-spacing:-0.430px">Объёмы</span>
<span class="t" style="left:389.00px;top:37.30px;font-size:14.3px;line-height:20px;color:#444;letter-spacing:-0.218px">Выполнение</span>
<span class="t" style="left:519.00px;top:37.30px;font-size:14.3px;line-height:20px;color:#444;letter-spacing:-0.761px">Вид</span>
<span class="t" style="left:594.00px;top:37.30px;font-size:14.3px;line-height:20px;color:#444;letter-spacing:-0.413px">Операции</span>
<span class="t" style="left:705.30px;top:37.30px;font-size:14.3px;line-height:20px;color:#444;letter-spacing:-0.548px">Отчет</span>
<span class="t" style="left:8.70px;top:111.70px;font-size:11px;line-height:15px;color:#1c1c1c;letter-spacing:0.200px;-webkit-text-stroke:0.42px #1c1c1c">Копировать</span>
<span class="t" style="left:86.70px;top:111.70px;font-size:11px;line-height:15px;color:#1c1c1c;letter-spacing:0.058px;-webkit-text-stroke:0.42px #1c1c1c">Вставить</span>
<span class="t" style="left:156.00px;top:111.70px;font-size:11px;line-height:15px;color:#1c1c1c;letter-spacing:0.158px;-webkit-text-stroke:0.42px #1c1c1c">Вырезать</span>
<span class="t" style="left:260.50px;top:71.30px;font-size:11px;line-height:15px;color:#1c1c1c;letter-spacing:-0.005px;-webkit-text-stroke:0.42px #1c1c1c">Отменить</span>
<span class="t" style="left:260.50px;top:94.30px;font-size:11px;line-height:15px;color:#ababab;letter-spacing:0.105px;-webkit-text-stroke:0.42px #ababab">Повторить</span>
<span class="t" style="left:260.50px;top:117.30px;font-size:11px;line-height:15px;color:#1c1c1c;letter-spacing:0.039px;-webkit-text-stroke:0.42px #1c1c1c">Удалить</span>
<span class="t" style="left:378.20px;top:111.70px;font-size:11px;line-height:15px;color:#1c1c1c;letter-spacing:0.015px;-webkit-text-stroke:0.42px #1c1c1c">Базы</span>
<span class="t" style="left:445.20px;top:111.70px;font-size:11px;line-height:15px;color:#1c1c1c;letter-spacing:0.126px;-webkit-text-stroke:0.42px #1c1c1c">Сметы</span>
<span class="t" style="left:506.70px;top:111.70px;font-size:11px;line-height:15px;color:#ababab;letter-spacing:0.361px;-webkit-text-stroke:0.42px #ababab">Открытые</span>
<span class="t" style="left:601.00px;top:111.70px;font-size:11px;line-height:15px;color:#1c1c1c;letter-spacing:-0.209px;-webkit-text-stroke:0.42px #1c1c1c">Папка</span>
<span class="t" style="left:671.70px;top:111.70px;font-size:11px;line-height:15px;color:#1c1c1c;letter-spacing:-0.393px;-webkit-text-stroke:0.42px #1c1c1c">Смета</span>
<span class="t" style="left:754.50px;top:111.70px;font-size:11px;line-height:15px;color:#1c1c1c;letter-spacing:0.333px;-webkit-text-stroke:0.42px #1c1c1c">Поиск</span>
<span class="t" style="left:816.00px;top:111.70px;font-size:11px;line-height:15px;color:#ababab;letter-spacing:0.172px;-webkit-text-stroke:0.42px #ababab">Заменить</span>
<span class="t" style="left:894.00px;top:111.70px;font-size:11px;line-height:15px;color:#1c1c1c;letter-spacing:0.239px;-webkit-text-stroke:0.42px #1c1c1c">Импорт сметы</span>
<span class="t" style="left:979.20px;top:111.70px;font-size:11px;line-height:15px;color:#1c1c1c;letter-spacing:0.238px;-webkit-text-stroke:0.42px #1c1c1c">Экспорт сметы</span>
<span class="t" style="left:1088.80px;top:111.90px;font-size:11px;line-height:15px;color:#1c1c1c;letter-spacing:0.162px;-webkit-text-stroke:0.42px #1c1c1c">Пакетная выгрузка</span>
<span class="t" style="left:1101.50px;top:123.40px;font-size:11px;line-height:15px;color:#1c1c1c;letter-spacing:0.256px;-webkit-text-stroke:0.42px #1c1c1c">документации</span>
<span class="t" style="left:1228.00px;top:111.70px;font-size:11px;line-height:15px;color:#1c1c1c;letter-spacing:0.099px;-webkit-text-stroke:0.42px #1c1c1c">Справка о</span>
<span class="t" style="left:1225.30px;top:123.40px;font-size:11px;line-height:15px;color:#1c1c1c;letter-spacing:0.267px;-webkit-text-stroke:0.42px #1c1c1c">программе</span>
<span class="t" style="left:1304.30px;top:111.70px;font-size:11px;line-height:15px;color:#ababab;letter-spacing:0.139px;-webkit-text-stroke:0.42px #ababab">Горячие</span>
<span class="t" style="left:1302.30px;top:123.40px;font-size:11px;line-height:15px;color:#ababab;letter-spacing:0.286px;-webkit-text-stroke:0.42px #ababab">клавиши</span>
<span class="t" style="left:1385.70px;top:111.70px;font-size:11px;line-height:15px;color:#1c1c1c;letter-spacing:0.020px;-webkit-text-stroke:0.42px #1c1c1c">Сменить</span>
<span class="t" style="left:1396.70px;top:123.40px;font-size:11px;line-height:15px;color:#1c1c1c;letter-spacing:0.013px;-webkit-text-stroke:0.42px #1c1c1c">базу</span>
<span class="t" style="left:74.30px;top:137.60px;font-size:11px;line-height:15px;color:#666;letter-spacing:-0.266px">Буфер обмена</span>
<span class="t" style="left:244.40px;top:137.60px;font-size:11px;line-height:15px;color:#666;letter-spacing:0.148px">Редактирование</span>
<span class="t" style="left:421.70px;top:137.60px;font-size:11px;line-height:15px;color:#666;letter-spacing:0.146px">Мои документы</span>
<span class="t" style="left:631.80px;top:137.60px;font-size:11px;line-height:15px;color:#666;letter-spacing:0.021px">Создать</span>
<span class="t" style="left:791.00px;top:137.60px;font-size:11px;line-height:15px;color:#666;letter-spacing:0.258px">Поиск</span>
<span class="t" style="left:1006.00px;top:137.60px;font-size:11px;line-height:15px;color:#666;letter-spacing:0.322px">Импорт/экспорт</span>
<span class="t" style="left:1269.70px;top:137.60px;font-size:11px;line-height:15px;color:#666;letter-spacing:-0.011px">Помощь</span>
<span class="t" style="left:103.40px;top:172.40px;font-size:11px;line-height:15px;color:#0c0c0c;letter-spacing:0.143px">Мои сметы</span>
<span class="t" style="left:121.40px;top:207.40px;font-size:11px;line-height:15px;color:#0c0c0c;letter-spacing:-0.074px">Новая смета</span>
<span class="t" style="left:121.40px;top:243.40px;font-size:11px;line-height:15px;color:#0c0c0c;letter-spacing:0.105px">Подготовительные работы</span>
<span class="t" style="left:103.40px;top:280.40px;font-size:11px;line-height:15px;color:#0c0c0c;letter-spacing:0.036px">Корзина</span>
<span class="t" style="left:403.90px;top:163.60px;font-size:13.9px;line-height:19px;color:#222;letter-spacing:-0.685px;font-weight:700">Основные</span>
<span class="t" style="left:521.40px;top:162.60px;font-size:14px;line-height:20px;color:#444;letter-spacing:-0.457px">Оформление</span>
<span class="t" style="left:655.00px;top:162.60px;font-size:14px;line-height:20px;color:#444;letter-spacing:0.080px">Дополнительные настройки</span>
<span class="t" style="left:886.30px;top:162.60px;font-size:14px;line-height:20px;color:#444;letter-spacing:0.548px">Итоги</span>
<span class="t" style="left:974.00px;top:162.60px;font-size:14px;line-height:20px;color:#444;letter-spacing:-0.044px">Выполнение</span>
<span class="t" style="left:414.00px;top:228.60px;font-size:13.9px;line-height:19px;color:#1c1c1c;letter-spacing:-0.242px;font-weight:700">Наименование сметы</span>
<span class="t" style="left:414.00px;top:267.50px;font-size:13.9px;line-height:19px;color:#1c1c1c;letter-spacing:-0.356px;font-weight:700">Наименование объекта</span>
<span class="t" style="left:414.00px;top:307.20px;font-size:13.9px;line-height:19px;color:#1c1c1c;letter-spacing:-0.263px;font-weight:700">Номер/шифр сметы</span>
<span class="t" style="left:633.00px;top:227.60px;font-size:14px;line-height:20px;color:#333;letter-spacing:0.201px">Подготовительные работы</span>
<span class="t" style="left:634.00px;top:266.50px;font-size:14px;line-height:20px;color:#333;letter-spacing:0.140px">Строительство школы</span>
<span class="t" style="left:634.00px;top:306.20px;font-size:14px;line-height:20px;color:#333;letter-spacing:-0.322px">01-04-25</span>
<span class="t" style="left:412.70px;top:377.00px;font-size:16px;line-height:22px;color:#1c1c1c;letter-spacing:-0.578px;font-weight:700">Вид работ</span>
<span class="t" style="left:447.70px;top:410.80px;font-size:12px;line-height:17px;color:#1c1c1c;letter-spacing:-0.492px;font-weight:700">Строительство</span>
<span class="t" style="left:447.70px;top:453.80px;font-size:12px;line-height:17px;color:#1c1c1c;letter-spacing:-0.329px;font-weight:700">Капитальный ремонт объектов непроизводственного назначения</span>
<span class="t" style="left:447.70px;top:480.00px;font-size:12px;line-height:17px;color:#333;letter-spacing:0.034px">Применение коэф. к НР и СП для сборников ТСН-2001.4 при капитальном ремонте объектов</span>
<span class="t" style="left:447.70px;top:491.80px;font-size:12px;line-height:17px;color:#333;letter-spacing:0.122px">находящихся в эксплуатации</span>
<span class="t" style="left:447.70px;top:528.70px;font-size:12px;line-height:17px;color:#1c1c1c;letter-spacing:-0.267px;font-weight:700">Кап.ремонт объектов производственного назначения, сетей инженерно-технического обеспечения,</span>
<span class="t" style="left:447.70px;top:540.70px;font-size:12px;line-height:17px;color:#1c1c1c;letter-spacing:-0.232px;font-weight:700">кап.ремонт дорог и инженерных сооружений (в т.ч. гидротехнических сооружений, мостов,</span>
<span class="t" style="left:447.70px;top:552.70px;font-size:12px;line-height:17px;color:#1c1c1c;letter-spacing:-0.426px;font-weight:700">путепроводов и тому подобное)</span>
<span class="t" style="left:447.70px;top:589.80px;font-size:12px;line-height:17px;color:#1c1c1c;letter-spacing:-0.247px;font-weight:700">Реконструкция</span>
<span class="t" style="left:447.70px;top:615.70px;font-size:12px;line-height:17px;color:#333;letter-spacing:0.110px">Строительство в рамках одного титула новых зданий, сооружений, новых участков наружных</span>
<span class="t" style="left:447.70px;top:627.70px;font-size:12px;line-height:17px;color:#333;letter-spacing:0.062px">инженерных сетей по новой или старой трассе</span>
<span class="t" style="left:413.70px;top:695.50px;font-size:16px;line-height:22px;color:#1c1c1c;letter-spacing:-0.572px;font-weight:700">Справочник поправок</span>
<span class="t" style="left:413.70px;top:723.70px;font-size:13.9px;line-height:19px;color:#1c1c1c;letter-spacing:-0.555px;font-weight:700">Сборник</span>
<span class="t" style="left:633.00px;top:722.70px;font-size:14px;line-height:20px;color:#1c1c1c;letter-spacing:0.047px">Поправки для ТСН-2001 от 28.11.2025 г. доп 80</span>
<span class="t" style="left:413.70px;top:799.40px;font-size:13.9px;line-height:19px;color:#a6a6a6;letter-spacing:-0.677px;font-weight:700">Основание</span>
<span class="t" style="left:633.00px;top:798.40px;font-size:14px;line-height:20px;color:#a6a6a6;letter-spacing:0.038px">Приказ № МКЭ-ОД/25-132 от 22.12.2025</span>
<span class="t" style="left:674.00px;top:839.40px;font-size:14px;line-height:20px;color:#1c1c1c;letter-spacing:0.100px">Материалы</span>
<span class="t" style="left:886.00px;top:839.40px;font-size:14px;line-height:20px;color:#1c1c1c;letter-spacing:-0.067px">Оборудование</span>
<span class="t" style="left:518.30px;top:864.00px;font-size:13.9px;line-height:19px;color:#a6a6a6;letter-spacing:-0.500px;font-weight:700">Инфляторы</span>
<span class="t" style="left:518.00px;top:885.00px;font-size:13.9px;line-height:19px;color:#a6a6a6;letter-spacing:-0.390px;font-weight:700">Дефляторы</span>
<span class="t" style="left:483.00px;top:905.80px;font-size:13.9px;line-height:19px;color:#1c1c1c;letter-spacing:-0.497px;font-weight:700">Транспортные, %</span>
<span class="t" style="left:555.30px;top:926.80px;font-size:13.9px;line-height:19px;color:#1c1c1c;letter-spacing:-0.950px;font-weight:700">ЗСР, %</span>
<span class="t" style="left:700.00px;top:865.80px;font-size:12.5px;line-height:18px;color:#a6a6a6;letter-spacing:0.108px">9,84</span>
<span class="t" style="left:700.00px;top:886.80px;font-size:12.5px;line-height:18px;color:#a6a6a6;letter-spacing:0.108px">9,84</span>
<span class="t" style="left:700.30px;top:907.80px;font-size:12.5px;line-height:18px;color:#1c1c1c;letter-spacing:0.008px">0,00</span>
<span class="t" style="left:700.30px;top:928.80px;font-size:12.5px;line-height:18px;color:#1c1c1c;letter-spacing:0.008px">0,00</span>
<span class="t" style="left:921.00px;top:865.80px;font-size:12.5px;line-height:18px;color:#a6a6a6;letter-spacing:-0.026px">7,57</span>
<span class="t" style="left:921.00px;top:886.80px;font-size:12.5px;line-height:18px;color:#a6a6a6;letter-spacing:-0.026px">7,57</span>
<span class="t" style="left:921.00px;top:907.80px;font-size:12.5px;line-height:18px;color:#1c1c1c;letter-spacing:-0.026px">0,00</span>
<span class="t" style="left:921.00px;top:928.80px;font-size:12.5px;line-height:18px;color:#1c1c1c;letter-spacing:-0.026px">0,00</span>
<span class="t" style="left:413.70px;top:959.80px;font-size:13.9px;line-height:19px;color:#1c1c1c;letter-spacing:-0.483px;font-weight:700">НДС для позиций по прайсу, %</span>
<span class="t" style="left:1028.70px;top:958.80px;font-size:14px;line-height:20px;color:#333;letter-spacing:-1.186px">22</span>
<span class="t" style="left:388.70px;top:1024.40px;font-size:13.9px;line-height:19px;color:#1c1c1c;letter-spacing:-0.521px;font-weight:700">Всего</span>
<span class="t" style="left:445.30px;top:1023.40px;font-size:14px;line-height:20px;color:#1c1c1c;letter-spacing:-0.068px">Б: 912,40 ₽</span>
<span class="t" style="left:538.70px;top:1023.40px;font-size:14px;line-height:20px;color:#1c1c1c;letter-spacing:-0.169px">Т: 26 319,47 ₽</span>
<span class="t" style="left:1094.30px;top:228.60px;font-size:13.9px;line-height:19px;color:#a6a6a6;letter-spacing:-0.293px;font-weight:700">Нормативная база</span>
<span class="t" style="left:1314.30px;top:227.60px;font-size:14px;line-height:20px;color:#a6a6a6;letter-spacing:0.099px">Территориальные сметные нормативы для Москвы ТС...</span>
<span class="t" style="left:1094.30px;top:271.60px;font-size:13.9px;line-height:19px;color:#1c1c1c;letter-spacing:-0.528px;font-weight:700">Дополнение</span>
<span class="t" style="left:1314.30px;top:270.60px;font-size:14px;line-height:20px;color:#1c1c1c;letter-spacing:0.041px">Дополнение 80 от 15.12.2025</span>
<span class="t" style="left:1118.00px;top:309.40px;font-size:14px;line-height:20px;color:#333;letter-spacing:0.146px">Применить зимнее удорожание</span>
<span class="t" style="left:1093.30px;top:379.40px;font-size:16px;line-height:22px;color:#1c1c1c;letter-spacing:-0.404px;font-weight:700">Коэффициенты (индексы) пересчета</span>
<span class="t" style="left:1094.30px;top:411.40px;font-size:13.9px;line-height:19px;color:#1c1c1c;letter-spacing:-1.242px;font-weight:700">Год</span>
<span class="t" style="left:1314.30px;top:410.40px;font-size:14px;line-height:20px;color:#1c1c1c;letter-spacing:-0.319px">2026</span>
<span class="t" style="left:1094.30px;top:449.40px;font-size:13.9px;line-height:19px;color:#1c1c1c;letter-spacing:-0.397px;font-weight:700">Период выпуска</span>
<span class="t" style="left:1313.60px;top:448.40px;font-size:14px;line-height:20px;color:#1c1c1c;letter-spacing:0.233px">I квартал (выпуск 219)</span>
<span class="t" style="left:1094.30px;top:516.80px;font-size:16px;line-height:22px;color:#1c1c1c;letter-spacing:0.025px;font-weight:700">ТСН-2001.13</span>
<span class="t" style="left:1094.30px;top:548.70px;font-size:13.9px;line-height:19px;color:#1c1c1c;letter-spacing:-0.360px;font-weight:700">Нормативная база</span>
<span class="t" style="left:1314.30px;top:547.70px;font-size:14px;line-height:20px;color:#1c1c1c;letter-spacing:-0.048px">ТСН МГЭ глава 13. Доп. 46 от 25.12.2025</span>
<span class="t" style="left:1094.30px;top:587.40px;font-size:13.9px;line-height:19px;color:#1c1c1c;letter-spacing:-1.242px;font-weight:700">Год</span>
<span class="t" style="left:1314.30px;top:586.40px;font-size:14px;line-height:20px;color:#1c1c1c;letter-spacing:-0.319px">2026</span>
<span class="t" style="left:1094.30px;top:624.40px;font-size:13.9px;line-height:19px;color:#1c1c1c;letter-spacing:-0.397px;font-weight:700">Период выпуска</span>
<span class="t" style="left:1313.60px;top:623.40px;font-size:14px;line-height:20px;color:#1c1c1c;letter-spacing:0.234px">I квартал (выпуск 64)</span>
<span class="t" style="left:1093.30px;top:693.20px;font-size:16px;line-height:22px;color:#1c1c1c;letter-spacing:-0.315px;font-weight:700">Применение НР и СП для сборников 3.27, 3.29 и 4.10</span>
<span class="t" style="left:1128.30px;top:727.00px;font-size:12px;line-height:17px;color:#333;letter-spacing:0.165px">Автомобильные дороги</span>
<span class="t" style="left:1128.30px;top:752.00px;font-size:12px;line-height:17px;color:#333;letter-spacing:0.134px">Устройство покрытий дорожек, тротуаров, мостовых и площадок и прочее</span>
<span class="t" style="left:1094.30px;top:782.80px;font-size:12px;line-height:17px;color:#1c1c1c;letter-spacing:-0.390px;font-weight:700">Тоннели и метрополитены:</span>
<span class="t" style="left:1128.30px;top:802.00px;font-size:12px;line-height:17px;color:#333;letter-spacing:0.098px">Закрытый способ работ</span>
<span class="t" style="left:1128.30px;top:827.00px;font-size:12px;line-height:17px;color:#333;letter-spacing:0.052px">Открытый способ работ</span>
<span class="t" style="left:1094.30px;top:857.80px;font-size:12px;line-height:17px;color:#1c1c1c;letter-spacing:-0.441px;font-weight:700">Оборудование связи:</span>
<span class="t" style="left:1128.30px;top:877.00px;font-size:12px;line-height:17px;color:#333;letter-spacing:0.168px">Прокладка и монтаж сетей связи</span>
<span class="t" style="left:1128.30px;top:902.00px;font-size:12px;line-height:17px;color:#333;letter-spacing:0.216px">Прокладка и монтаж междугородных линий связи</span>
<span class="t" style="left:1243.60px;top:1032.80px;font-size:21.33px;line-height:30px;color:#b9b9b9;letter-spacing:-0.080px">Пересчитать смету</span>
<span class="t" style="left:1520.60px;top:1032.80px;font-size:21.33px;line-height:30px;color:#fff;letter-spacing:0.137px;-webkit-text-stroke:0.42px #fff">Редактировать смету</span>
</div>
</body></html>
